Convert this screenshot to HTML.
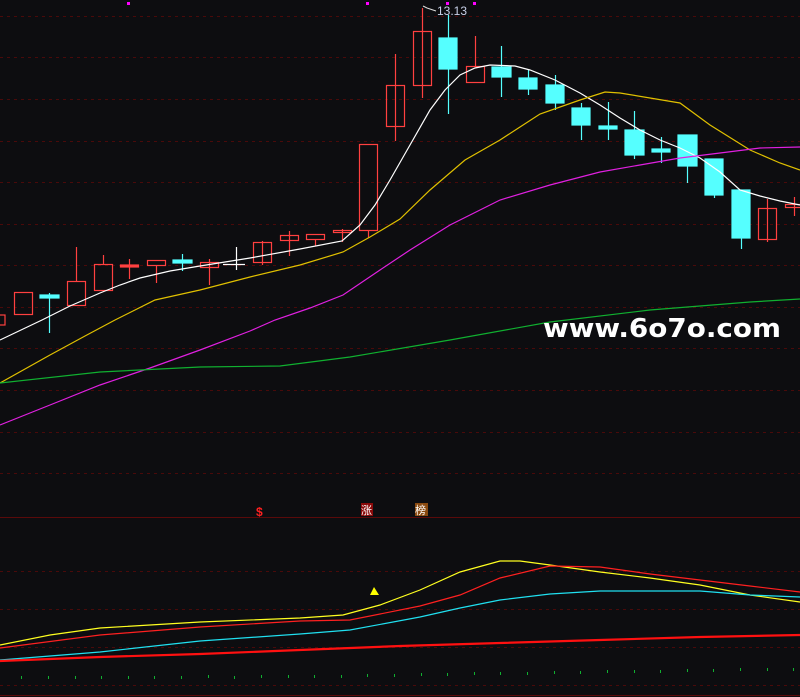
<!DOCTYPE html>
<html><head><meta charset="utf-8"><style>
html,body{margin:0;padding:0;background:#0d0d10;}
svg{display:block;}
</style></head><body>
<svg width="800" height="697" viewBox="0 0 800 697" xmlns="http://www.w3.org/2000/svg">
<rect width="800" height="697" fill="#0d0d10"/>
<g stroke="#4a0a0a" stroke-width="1" stroke-dasharray="3,4">
<line x1="0" y1="16.5" x2="800" y2="16.5"/>
<line x1="0" y1="57.5" x2="800" y2="57.5"/>
<line x1="0" y1="99.5" x2="800" y2="99.5"/>
<line x1="0" y1="141.5" x2="800" y2="141.5"/>
<line x1="0" y1="182.5" x2="800" y2="182.5"/>
<line x1="0" y1="224.5" x2="800" y2="224.5"/>
<line x1="0" y1="265.5" x2="800" y2="265.5"/>
<line x1="0" y1="307.5" x2="800" y2="307.5"/>
<line x1="0" y1="348.5" x2="800" y2="348.5"/>
<line x1="0" y1="390.5" x2="800" y2="390.5"/>
<line x1="0" y1="432.5" x2="800" y2="432.5"/>
<line x1="0" y1="473.5" x2="800" y2="473.5"/>
<line x1="0" y1="571.5" x2="800" y2="571.5"/>
<line x1="0" y1="609.5" x2="800" y2="609.5"/>
<line x1="0" y1="647.5" x2="800" y2="647.5"/>
<line x1="0" y1="685.5" x2="800" y2="685.5"/>
</g>
<line x1="0" y1="517.5" x2="800" y2="517.5" stroke="#5a0a0a"/>
<line x1="0" y1="695.5" x2="800" y2="695.5" stroke="#5a0a0a"/>

<!-- top magenta dots -->
<g fill="#ff00ff"><rect x="127" y="2" width="3" height="3"/><rect x="366" y="2" width="3" height="3"/><rect x="446" y="2" width="3" height="3"/><rect x="473" y="2" width="3" height="3"/></g>

<!-- candles -->
<g stroke="#ff4040" stroke-width="1.2" fill="none">
<rect x="-5" y="315" width="10" height="10"/>
<rect x="14.5" y="292.5" width="18" height="22"/>
<line x1="76.5" y1="247" x2="76.5" y2="281"/><rect x="67.5" y="281.5" width="18" height="24"/>
<line x1="103.5" y1="255" x2="103.5" y2="264"/><rect x="94.5" y="264.5" width="18" height="26"/>
<line x1="129.5" y1="259" x2="129.5" y2="279"/><rect x="120.5" y="265" width="18" height="2" fill="#ff4040"/>
<line x1="156.5" y1="265" x2="156.5" y2="283"/><rect x="147.5" y="260.5" width="18" height="5"/>
<line x1="209.5" y1="259" x2="209.5" y2="285"/><rect x="200.5" y="262.5" width="18" height="5"/>
<line x1="262.5" y1="241" x2="262.5" y2="265"/><rect x="253.5" y="242.5" width="18" height="20"/>
<line x1="289.5" y1="231" x2="289.5" y2="256"/><rect x="280.5" y="235.5" width="18" height="5"/>
<line x1="315.5" y1="239" x2="315.5" y2="246"/><rect x="306.5" y="234.5" width="18" height="5"/>
<line x1="342.5" y1="229" x2="342.5" y2="242"/><rect x="333.5" y="230.5" width="18" height="2"/>
<line x1="368.5" y1="230" x2="368.5" y2="238"/><rect x="359.5" y="144.5" width="18" height="86"/>
<line x1="395.5" y1="54" x2="395.5" y2="141"/><rect x="386.5" y="85.5" width="18" height="41"/>
<line x1="422.5" y1="8" x2="422.5" y2="98"/><rect x="413.5" y="31.5" width="18" height="54"/>
<line x1="475.5" y1="36" x2="475.5" y2="66"/><rect x="466.5" y="66.5" width="18" height="16"/>
<line x1="767.5" y1="199" x2="767.5" y2="242"/><rect x="758.5" y="208.5" width="18" height="31"/>
<line x1="794.5" y1="197" x2="794.5" y2="216"/><rect x="785.5" y="204.5" width="18" height="3"/>
</g>
<g stroke="#55ffff" stroke-width="1.2" fill="#55ffff">
<line x1="49.5" y1="293" x2="49.5" y2="333"/><rect x="40" y="295" width="19" height="3"/>
<line x1="182.5" y1="254" x2="182.5" y2="271"/><rect x="173" y="260" width="19" height="3"/>
<line x1="448.5" y1="15" x2="448.5" y2="114"/><rect x="439" y="38" width="18" height="31"/>
<line x1="501.5" y1="46" x2="501.5" y2="97"/><rect x="492" y="67" width="19" height="10"/>
<line x1="528.5" y1="70" x2="528.5" y2="95"/><rect x="519" y="78" width="18" height="11"/>
<line x1="555.5" y1="75" x2="555.5" y2="110"/><rect x="546" y="85" width="18" height="18"/>
<line x1="581.5" y1="103" x2="581.5" y2="140"/><rect x="572" y="108" width="18" height="17"/>
<line x1="608.5" y1="102" x2="608.5" y2="140"/><rect x="599" y="126" width="18" height="3"/>
<line x1="634.5" y1="111" x2="634.5" y2="159"/><rect x="625" y="130" width="19" height="25"/>
<line x1="661.5" y1="137" x2="661.5" y2="163"/><rect x="652" y="149" width="18" height="3"/>
<line x1="687.5" y1="135" x2="687.5" y2="183"/><rect x="678" y="135" width="19" height="31"/>
<line x1="714.5" y1="159" x2="714.5" y2="198"/><rect x="705" y="159" width="18" height="36"/>
<line x1="741.5" y1="190" x2="741.5" y2="249"/><rect x="732" y="190" width="18" height="48"/>
</g>
<g stroke="#ffffff" stroke-width="1.2"><line x1="236.5" y1="247" x2="236.5" y2="270"/><line x1="223" y1="264.5" x2="245" y2="264.5"/></g>

<!-- MA lines -->
<g fill="none" stroke-width="1.2">
<polyline stroke="#ffffff" points="0,340 42,320 70,306 100,293 120,285 140,278 170,271 200,266 250,258 300,249 342,241 360,225 375,205 390,180 410,145 430,110 445,90 460,75 475,68 490,65 515,66 530,70 555,80 580,93 600,105 620,118 640,130 660,140 680,148 700,158 720,172 740,190 760,196 780,201 800,205"/>
<polyline stroke="#e0c000" points="0,383 50,355 85,336 115,320 155,300 200,290 250,277 300,265 343,252 370,237 400,219 430,190 465,160 500,140 540,114 580,100 605,92 620,93 650,98 680,103 710,125 750,150 780,163 800,170"/>
<polyline stroke="#e020e0" points="0,425 50,405 100,385 150,368 200,350 250,331 275,320 310,308 343,295 380,270 410,250 450,225 500,200 550,185 600,172 640,165 680,158 720,153 760,148 800,147"/>
<polyline stroke="#10b030" points="0,383 100,372 200,367 280,366 350,357 450,340 550,322 650,310 750,302 800,299"/>
</g>

<!-- high label -->
<polyline points="423,6 427,8 436,11" fill="none" stroke="#ddd" stroke-width="1"/>
<text x="437" y="15" font-family="Liberation Sans, sans-serif" font-size="12" fill="#c8d0e8">13.13</text>

<!-- watermark -->
<text x="543" y="337" font-family="DejaVu Sans, Liberation Sans, sans-serif" font-weight="bold" font-size="26" fill="#ffffff" textLength="238" lengthAdjust="spacingAndGlyphs">www.6o7o.com</text>

<!-- markers -->
<text x="256" y="516" font-family="Liberation Sans, sans-serif" font-weight="bold" font-size="12" fill="#ff2020">$</text>
<rect x="361" y="503" width="12" height="13" fill="#8a0a0a"/>
<text x="361" y="514" font-family="Noto Sans CJK SC, sans-serif" font-size="11" fill="#ffffff">涨</text>
<rect x="415" y="503" width="13" height="13" fill="#8a4a10"/>
<text x="415" y="514" font-family="Noto Sans CJK SC, sans-serif" font-size="11" fill="#ffffff">榜</text>

<!-- lower panel -->
<g fill="none">
<polyline stroke="#ffff20" stroke-width="1.2" points="0,645 50,635 100,628 200,622 300,618 343,615 380,605 420,590 460,572 500,561 520,561 550,565 600,572 650,578 700,585 750,595 800,602"/>
<polyline stroke="#ff2020" stroke-width="1.2" points="0,648 100,635 200,627 300,621 350,620 420,606 460,595 500,578 550,566 600,567 650,574 700,580 750,586 800,592"/>
<polyline stroke="#20e0f0" stroke-width="1.2" points="0,660 100,652 200,641 300,634 350,630 420,617 460,608 500,600 550,594 600,591 700,591 750,595 800,597"/>
<polyline stroke="#ff1010" stroke-width="2.2" points="0,661 100,657 200,654 300,650 400,646 500,643 600,640 700,637 800,635"/>
</g>
<polygon points="374,587 370,595 379,595" fill="#ffff00"/>
<g fill="#10b030">
<rect x="21" y="676" width="1" height="3"/><rect x="48" y="676" width="1" height="3"/><rect x="75" y="676" width="1" height="3"/><rect x="101" y="676" width="1" height="3"/><rect x="128" y="676" width="1" height="3"/><rect x="154" y="676" width="1" height="3"/><rect x="181" y="676" width="1" height="3"/><rect x="208" y="675" width="1" height="3"/><rect x="234" y="676" width="1" height="3"/><rect x="261" y="675" width="1" height="3"/><rect x="288" y="675" width="1" height="3"/><rect x="314" y="675" width="1" height="3"/><rect x="341" y="675" width="1" height="3"/><rect x="367" y="674" width="1" height="3"/><rect x="394" y="674" width="1" height="3"/><rect x="421" y="673" width="1" height="3"/><rect x="447" y="673" width="1" height="3"/><rect x="474" y="672" width="1" height="3"/><rect x="500" y="672" width="1" height="3"/><rect x="527" y="672" width="1" height="3"/><rect x="554" y="671" width="1" height="3"/><rect x="580" y="671" width="1" height="3"/><rect x="607" y="670" width="1" height="3"/><rect x="634" y="670" width="1" height="3"/><rect x="660" y="670" width="1" height="3"/><rect x="687" y="669" width="1" height="3"/><rect x="713" y="669" width="1" height="3"/><rect x="740" y="668" width="1" height="3"/><rect x="767" y="668" width="1" height="3"/><rect x="793" y="668" width="1" height="3"/>
</g>
</svg>
</body></html>
